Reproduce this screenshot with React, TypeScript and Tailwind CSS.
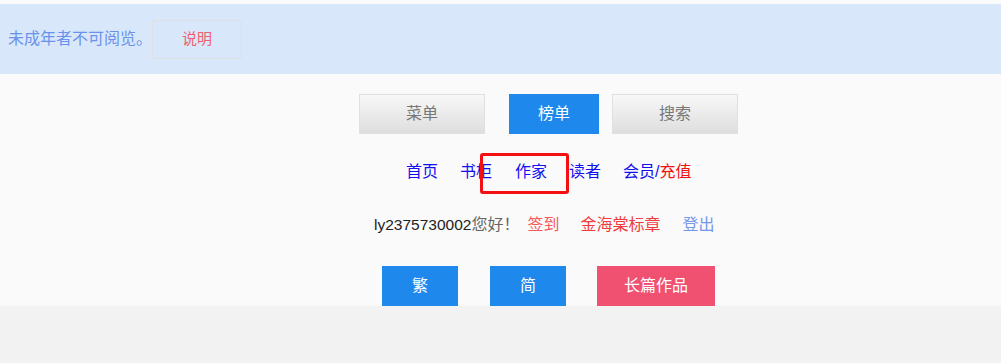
import React from "react";

const cjk = { fontFamily: '"Liberation Sans", "Noto Sans CJK SC", sans-serif' };

export default function App() {
  return (
    <div
      className="relative w-[1001px] h-[363px] overflow-hidden bg-[#fafafa] flex flex-col"
      style={cjk}
    >
      <div className="h-[4px] shrink-0" />
      <div className="h-[70px] shrink-0 bg-[#d8e8fa] flex items-center pl-[8px]">
        <span className="text-[16px] text-[#6a92ec] leading-none">未成年者不可阅览。</span>
        <div className="w-[90px] h-[39px] border border-[#dfe0e2] flex items-center justify-center text-[15px] text-[#f0606c]">
          说明
        </div>
      </div>

      <div className="mt-[20px] h-[40px] shrink-0 flex pl-[359px]">
        <div className="w-[126px] h-[40px] border border-[#e0e0e0] bg-gradient-to-b from-[#f8f8f8] to-[#dedede] flex items-center justify-center text-[16px] text-[#777]">
          菜单
        </div>
        <div className="ml-[24px] w-[90px] h-[40px] bg-[#1e88ec] flex items-center justify-center text-[16px] text-white">
          榜单
        </div>
        <div className="ml-[13px] w-[126px] h-[40px] border border-[#e0e0e0] bg-gradient-to-b from-[#f8f8f8] to-[#dedede] flex items-center justify-center text-[16px] text-[#777]">
          搜索
        </div>
      </div>

      <div className="mt-[20px] h-[36px] shrink-0 flex items-center pl-[406px] gap-[22px] text-[16px] text-[#1010f0]">
        <span>首页</span>
        <span>书柜</span>
        <span className="ml-[1px]">作家</span>
        <span>读者</span>
        <span>
          会员/<span className="text-[#f01010]">充值</span>
        </span>
      </div>

      <div className="mt-[18px] h-[34px] shrink-0 flex items-center pl-[374px] text-[16px]">
        <span className="text-[#222] text-[15.5px]">ly2375730002</span>
        <span className="text-[#666]">您好！</span>
        <span className="ml-[8px] text-[#f55a5a]">签到</span>
        <span className="ml-[21px] text-[#f03c3c]">金海棠标章</span>
        <span className="ml-[22px] text-[#7398ee]">登出</span>
      </div>

      <div className="mt-[24px] h-[40px] shrink-0 flex pl-[382px] text-[16px] text-white">
        <div className="w-[76px] h-[40px] bg-[#1e88ec] flex items-center justify-center">繁</div>
        <div className="ml-[32px] w-[76px] h-[40px] bg-[#1e88ec] flex items-center justify-center">简</div>
        <div className="ml-[31px] w-[118px] h-[40px] bg-[#f05170] flex items-center justify-center">长篇作品</div>
      </div>

      <div className="flex-1 bg-[#f2f2f2]" />

      <div className="absolute left-[480px] top-[153px] w-[89px] h-[41px] border-[3px] border-[#f41010] rounded-[3px]" />
    </div>
  );
}
